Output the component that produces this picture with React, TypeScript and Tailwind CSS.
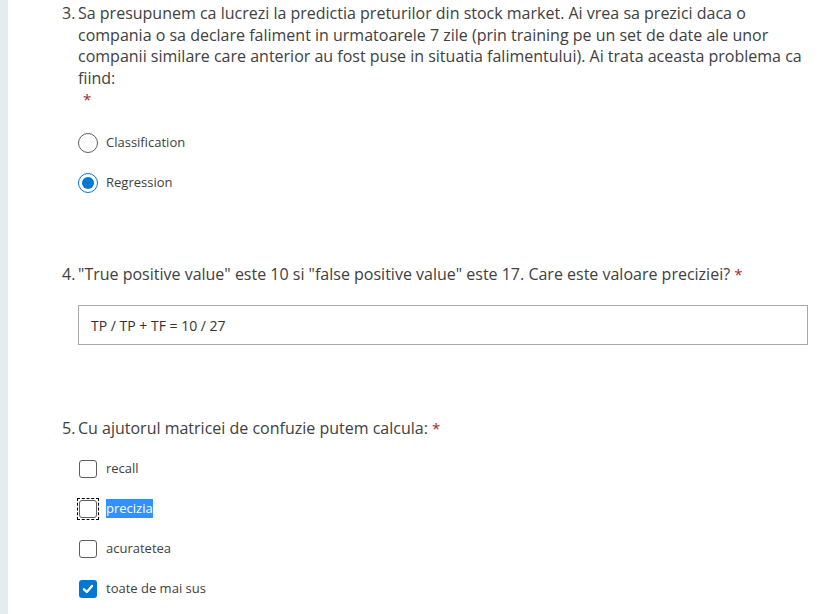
import React from "react";

const font = { fontFamily: '"Open Sans", "Noto Sans", sans-serif' };

const Star = () => <span className="text-[#a4262c] text-[15px]">*</span>;

const Radio = ({ checked, label }: { checked?: boolean; label: string }) => (
    <div className="flex items-center h-[40px]">
        <div
            className={
                "w-[20px] h-[20px] rounded-full border flex items-center justify-center " +
                (checked ? "border-[#0078d4]" : "border-[#605e5c]")
            }
        >
            {checked && <div className="w-[12px] h-[12px] rounded-full bg-[#0078d4]" />}
        </div>
        <span className="ml-[8px] text-[13px] text-[#404040]">{label}</span>
    </div>
);

const Check = ({ checked, focused, selected, label }: { checked?: boolean; focused?: boolean; selected?: boolean; label: string }) => (
    <div className="flex items-center h-[40px]">
        <div className={"p-[1px] " + (focused ? "outline outline-1 outline-dashed outline-black" : "")}>
            <div
                className={
                    "w-[18px] h-[18px] rounded-[3px] flex items-center justify-center " +
                    (checked ? "bg-[#0078d4]" : "border border-[#605e5c] bg-white")
                }
            >
                {checked && (
                    <svg width="12" height="12" viewBox="0 0 12 12">
                        <path d="M2 6.3 L4.8 9 L10 3" fill="none" stroke="white" strokeWidth="2.4" strokeLinecap="round" strokeLinejoin="round" />
                    </svg>
                )}
            </div>
        </div>
        <span
            className={
                "ml-[8px] text-[13px] " + (selected ? "bg-[#3390ff] text-white" : "text-[#404040]")
            }
        >
            {label}
        </span>
    </div>
);

export default function App() {
    return (
        <div className="flex min-h-[614px] bg-white text-[#404040]" style={font}>
            <div className="w-[8px] bg-[#e3ecef] shrink-0" />
            <div className="flex-1 pl-[54px] pr-[6px]">
                {/* Question 3 */}
                <div className="pt-[3px]">
                    <div className="flex text-[16px] leading-[21.5px]">
                        <span className="w-[16px] shrink-0">3.</span>
                        <div>
                            Sa presupunem ca lucrezi la predictia preturilor din stock market. Ai vrea sa prezici daca o
                            compania o sa declare faliment in urmatoarele 7 zile (prin training pe un set de date ale unor
                            companii similare care anterior au fost puse in situatia falimentului). Ai trata aceasta problema ca
                            fiind:
                            <div className="pl-[5px] leading-[21.5px]">
                                <Star />
                            </div>
                        </div>
                    </div>
                    <div className="pl-[16px] mt-[12px]">
                        <Radio label="Classification" />
                        <Radio checked label="Regression" />
                    </div>
                </div>

                {/* Question 4 */}
                <div className="mt-[61px]">
                    <div className="flex text-[16px] leading-[21.5px]">
                        <span className="w-[16px] shrink-0">4.</span>
                        <div>
                            "True positive value" este 10 si "false positive value" este 17. Care este valoare preciziei? <Star />
                        </div>
                    </div>
                    <div className="pl-[16px] mr-[14px] mt-[20px]">
                        <div className="h-[40px] border border-[#a8a8a8] flex items-center px-[12px] text-[14px] text-[#333]">
                            TP / TP + TF = 10 / 27
                        </div>
                    </div>
                </div>

                {/* Question 5 */}
                <div className="mt-[73px]">
                    <div className="flex text-[16px] leading-[21.5px]">
                        <span className="w-[16px] shrink-0">5.</span>
                        <div>
                            Cu ajutorul matricei de confuzie putem calcula: <Star />
                        </div>
                    </div>
                    <div className="pl-[16px] mt-[9px]">
                        <Check label="recall" />
                        <Check focused selected label="precizia" />
                        <Check label="acuratetea" />
                        <Check checked label="toate de mai sus" />
                    </div>
                </div>
            </div>
        </div>
    );
}
